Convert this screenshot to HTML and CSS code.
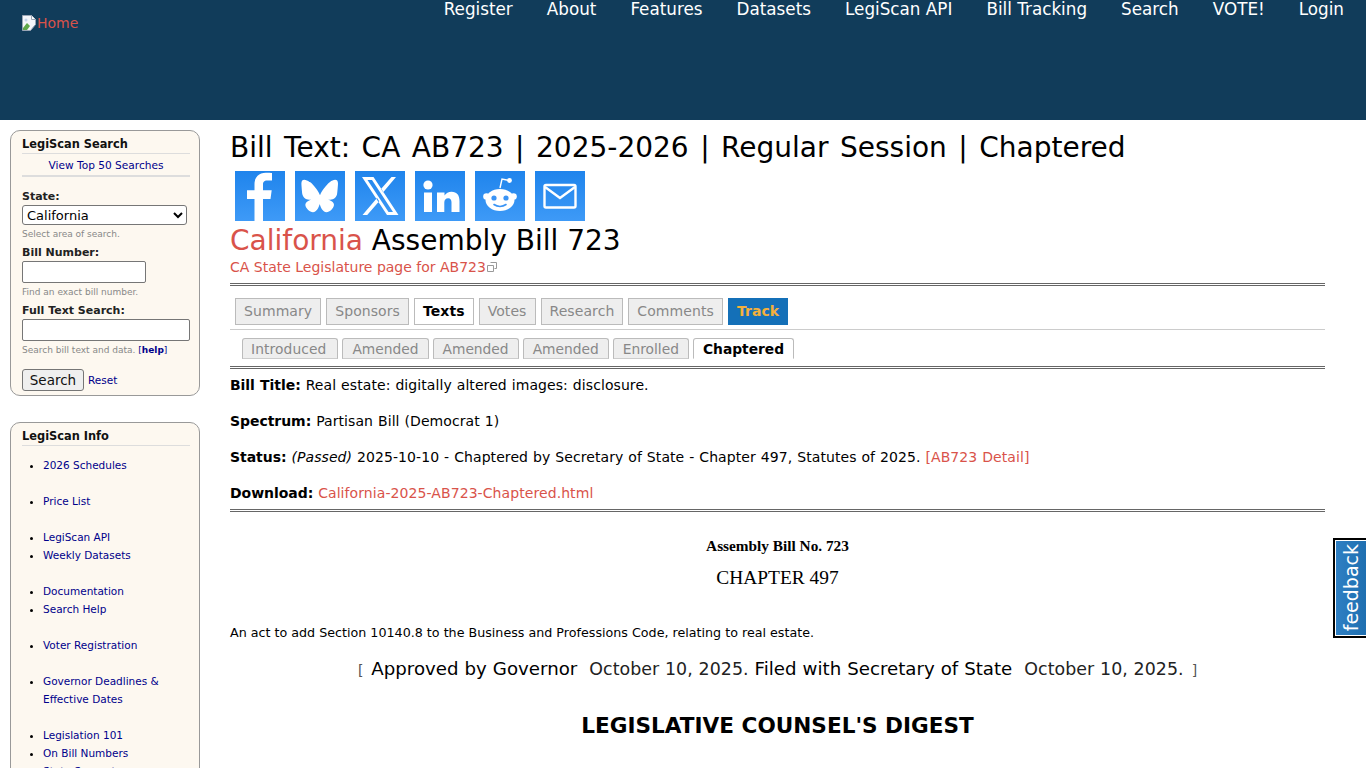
FILE: index.html
```html
<!DOCTYPE html>
<html lang="en">
<head>
  <meta charset="UTF-8">
  <meta name="viewport" content="width=device-width, initial-scale=1.0">
  <title>Bill Text: CA AB723 | 2025-2026 | Regular Session | Chaptered</title>
  <link rel="stylesheet" href="styles.css">
</head>
<body>
  <!-- Header -->
  <header class="site-header">
    <a href="#" class="logo">
      <svg class="broken-img" width="16" height="16" viewBox="0 0 16 16">
        <path d="M1.5 .5h9l4 4v5l-5 6h-8z" fill="#f4f6fa" stroke="#9aa5b5"/>
        <path d="M10.5 .5v4h4" fill="#fff" stroke="#9aa5b5"/>
        <path d="M2 13l4-5 3 3-3 4H2z" fill="#5fa84a"/>
        <circle cx="5" cy="5" r="1.5" fill="#c5d4ea"/>
      </svg>Home
    </a>
    <nav class="main-nav">
      <a href="#">Register</a>
      <a href="#">About</a>
      <a href="#">Features</a>
      <a href="#">Datasets</a>
      <a href="#">LegiScan API</a>
      <a href="#">Bill Tracking</a>
      <a href="#">Search</a>
      <a href="#">VOTE!</a>
      <a href="#">Login</a>
    </nav>
  </header>

  <div class="page">
    <!-- Sidebar -->
    <aside class="sidebar">
      <div class="side-box">
        <h2>LegiScan Search</h2>
        <p class="top-link"><a href="#">View Top 50 Searches</a></p>
        <form class="search-form">
          <label for="state">State:</label>
          <select id="state">
            <option>California</option>
          </select>
          <small>Select area of search.</small>
          <label for="bill">Bill Number:</label>
          <input type="text" id="bill" class="bill-input">
          <small>Find an exact bill number.</small>
          <label for="fulltext">Full Text Search:</label>
          <input type="text" id="fulltext" class="text-input">
          <small>Search bill text and data. <span class="help">[<a href="#">help</a>]</span></small>
          <div class="form-buttons">
            <button type="button">Search</button>
            <a href="#">Reset</a>
          </div>
        </form>
      </div>

      <div class="side-box">
        <h2>LegiScan Info</h2>
        <ul class="info-list">
          <li><a href="#">2026 Schedules</a></li>
          <li class="gap"><a href="#">Price List</a></li>
          <li class="gap"><a href="#">LegiScan API</a></li>
          <li><a href="#">Weekly Datasets</a></li>
          <li class="gap"><a href="#">Documentation</a></li>
          <li><a href="#">Search Help</a></li>
          <li class="gap"><a href="#">Voter Registration</a></li>
          <li class="gap"><a href="#">Governor Deadlines &amp; Effective Dates</a></li>
          <li class="gap"><a href="#">Legislation 101</a></li>
          <li><a href="#">On Bill Numbers</a></li>
          <li><a href="#">State Support</a></li>
        </ul>
      </div>
    </aside>

    <!-- Main content -->
    <main class="content">
      <h1>Bill Text: CA AB723 | 2025-2026 | Regular Session | Chaptered</h1>

      <div class="share">
        <a href="#" class="share-btn"><svg viewBox="0 0 50 50"><path d="M28 50V28h7.500l1.200-8.700H28v-5.500c0-2.500.8-4.200 4.300-4.200H37V2.100C36.100 2 33.600 1.800 30.800 1.800c-6.700 0-11.300 4.100-11.300 11.600v5.900H12V28h7.500v22z" fill="#fff"/></svg></a>
        <a href="#" class="share-btn"><svg viewBox="0 0 50 50"><path d="M15 11c4.300 3.200 8.600 9.700 10 13.200 1.400-3.500 5.700-10 10-13.200 3-2.300 8-4 8 1.600 0 1.100-.6 9.400-1 10.800-1.300 4.700-6.100 5.900-10.300 5.200 7.400 1.300 9.300 5.400 5.200 9.600-7.700 7.900-11.100-2-12-4.500-.1-.5-.2-.7-.2-.5 0-.2-.1 0-.2.500-.9 2.500-4.300 12.400-12 4.500-4.100-4.200-2.200-8.300 5.200-9.600-4.200.7-9-.5-10.300-5.200-.4-1.400-1-9.700-1-10.800 0-5.600 5-3.900 8-1.600z" fill="#fff"/></svg></a>
        <a href="#" class="share-btn"><svg viewBox="0 0 50 50"><path d="M7 6h11.500l25 38H32zM12.500 9l21 32h4.500L17 9zM41 6h-4.500L26 18l2.200 3.300zM7.500 44h4.700l12-13.700-2.200-3.300z" fill="#fff"/></svg></a>
        <a href="#" class="share-btn"><svg viewBox="0 0 50 50"><circle cx="13" cy="14" r="4.600" fill="#fff"/><path d="M9 21.500h8V41H9zM22 21.500h7.500v3c1.500-2.300 4-3.700 7-3.700 5.500 0 8 3.400 8 9.500V41h-8v-9.500c0-2.700-1-4.300-3.300-4.300-2.500 0-3.900 1.700-3.900 4.300V41H22z" fill="#fff"/></svg></a>
        <a href="#" class="share-btn"><svg viewBox="0 0 50 50"><path d="M25 17l2-9 6 1.300" fill="none" stroke="#fff" stroke-width="1.400"/><circle cx="34.500" cy="9.500" r="2.400" fill="#fff"/><circle cx="11.500" cy="25.500" r="3.300" fill="#fff"/><circle cx="38.500" cy="25.500" r="3.300" fill="#fff"/><ellipse cx="25" cy="29" rx="14.500" ry="11" fill="#fff"/><circle cx="19" cy="27" r="2.600" fill="#3a94f5"/><circle cx="31" cy="27" r="2.600" fill="#3a94f5"/><path d="M19 33.500c3.500 2.600 8.500 2.600 12 0" fill="none" stroke="#3a94f5" stroke-width="1.600" stroke-linecap="round"/></svg></a>
        <a href="#" class="share-btn"><svg viewBox="0 0 50 50"><rect x="9.500" y="14" width="31" height="22.500" rx="1.500" fill="none" stroke="#fff" stroke-width="2.400"/><path d="M10 16l15 11 15-11" fill="none" stroke="#fff" stroke-width="2.400"/></svg></a>
      </div>

      <h2 class="bill-name"><a href="#">California</a> Assembly Bill 723</h2>
      <p class="state-link"><a href="#">CA State Legislature page for AB723</a><svg class="ext" width="10" height="10" viewBox="0 0 10 10"><path d="M3.500 .5h6v6h-2M.5 3.500h6v6h-6z" fill="none" stroke="#999"/></svg></p>

      <hr class="double">

      <ul class="tabs">
        <li><a href="#">Summary</a></li>
        <li><a href="#">Sponsors</a></li>
        <li class="current"><a href="#">Texts</a></li>
        <li><a href="#">Votes</a></li>
        <li><a href="#">Research</a></li>
        <li><a href="#">Comments</a></li>
        <li class="track"><a href="#">Track</a></li>
      </ul>

      <ul class="subtabs">
        <li><a href="#">Introduced</a></li>
        <li><a href="#">Amended</a></li>
        <li><a href="#">Amended</a></li>
        <li><a href="#">Amended</a></li>
        <li><a href="#">Enrolled</a></li>
        <li class="current"><a href="#">Chaptered</a></li>
      </ul>

      <hr class="double">

      <p class="meta"><b>Bill Title:</b> Real estate: digitally altered images: disclosure.</p>
      <p class="meta"><b>Spectrum:</b> Partisan Bill (Democrat 1)</p>
      <p class="meta"><b>Status:</b> <i>(Passed)</i> 2025-10-10 - Chaptered by Secretary of State - Chapter 497, Statutes of 2025. <a href="#">[AB723 Detail]</a></p>
      <p class="meta"><b>Download:</b> <a href="#">California-2025-AB723-Chaptered.html</a></p>

      <hr class="double">

      <div class="bill-text">
        <p class="bill-no">Assembly Bill No. 723</p>
        <p class="chapter">CHAPTER 497</p>
        <p class="act">An act to add Section 10140.8 to the Business and Professions Code, relating to real estate.</p>
        <p class="approved"><span class="bracket">[</span> Approved by Governor <span class="date">October 10, 2025.</span> Filed with Secretary of State <span class="date">October 10, 2025.</span> <span class="bracket">]</span></p>
        <p class="digest">LEGISLATIVE COUNSEL'S DIGEST</p>
      </div>
    </main>
  </div>

  <a href="#" class="feedback"><span>feedback</span></a>
</body>
</html>
```

FILE: styles.css
```css
/* Basic Reset */
* {
  margin: 0;
  padding: 0;
  box-sizing: border-box;
}

html, body {
  height: 768px;
  overflow: hidden;
}

body {
  background-color: #fff;
  font-family: "DejaVu Sans", Verdana, sans-serif;
  font-size: 14px;
  color: #000;
}

a {
  text-decoration: none;
}

/* Header */
.site-header {
  height: 120px;
  background-color: #113c5a;
  display: flex;
  justify-content: space-between;
  align-items: flex-start;
}

.logo {
  display: flex;
  align-items: center;
  margin: 15px 0 0 21px;
  color: #d9534a;
  font-size: 14px;
  line-height: 16px;
}

.main-nav {
  display: flex;
  gap: 34px;
  padding-right: 22px;
}

.main-nav a {
  color: #fff;
  font-size: 16.800px;
  line-height: 19px;
}

/* Page layout */
.page {
  display: flex;
  align-items: flex-start;
}

.sidebar {
  width: 190px;
  margin: 10px 0 0 10px;
  flex-shrink: 0;
}

.side-box {
  background-color: #fdf8f0;
  border: 1px solid #999;
  border-radius: 10px;
  padding: 6px 9px 4px 11px;
  margin-bottom: 26px;
}

.side-box h2 {
  font-size: 11.400px;
  font-weight: bold;
  line-height: 15px;
  color: #111;
  padding-bottom: 1px;
  border-bottom: 1px solid #ddd;
}

.top-link {
  text-align: center;
  font-size: 10.600px;
  line-height: 14px;
  padding: 4px 0 3px;
  border-bottom: 2px solid #ddd;
}

.side-box a {
  color: #00008b;
}

.search-form {
  display: flex;
  flex-direction: column;
  align-items: flex-start;
  padding-top: 13px;
}

.search-form label {
  font-size: 11px;
  line-height: 14px;
  font-weight: bold;
  color: #222;
}

.search-form select {
  width: 165px;
  height: 20px;
  margin-top: 1px;
  font-family: inherit;
  font-size: 13px;
  background: #fff;
  border: 1px solid #767676;
  border-radius: 3px;
}

.search-form input {
  height: 22px;
  margin-top: 1px;
  background: #fff;
  border: 1px solid #767676;
  border-radius: 2px;
}

.bill-input {
  width: 124px;
}

.text-input {
  width: 168px;
}

.search-form small {
  font-size: 9px;
  line-height: 12px;
  color: #888;
  margin: 3px 0 6px;
}

.help {
  color: #00008b;
}

.help a {
  font-weight: bold;
}

.form-buttons {
  display: flex;
  align-items: center;
  gap: 4px;
  margin-top: 7px;
}

.form-buttons button {
  width: 62px;
  height: 22px;
  font-family: inherit;
  font-size: 13.500px;
  background: #efefef;
  border: 1px solid #767676;
  border-radius: 3px;
  color: #111;
}

.form-buttons a {
  font-size: 10.500px;
}

.info-list {
  padding: 10px 0 0 21px;
  font-size: 10.500px;
  line-height: 18px;
}

.info-list .gap {
  margin-top: 18px;
}

/* Main content */
.content {
  width: 1095px;
  margin: 10px 0 0 30px;
}

.content a {
  color: #d9534a;
}

h1 {
  font-size: 28px;
  font-weight: normal;
  line-height: 34px;
  word-spacing: 2.600px;
  padding-top: 1px;
  color: #000;
}

.share {
  display: flex;
  gap: 10px;
  padding: 6px 0 0 5px;
}

.share-btn {
  display: block;
  width: 50px;
  height: 50px;
  background: linear-gradient(#1f84ec, #3e9af7);
}

.share-btn svg {
  display: block;
  width: 50px;
  height: 50px;
}

.bill-name {
  font-size: 28px;
  font-weight: normal;
  line-height: 34px;
  padding-top: 3px;
}

.state-link {
  font-size: 14px;
  line-height: 18px;
}

.ext {
  margin-left: 1px;
}

hr.double {
  border: none;
  border-top: 3px double #666;
  height: 4px;
}

.state-link + hr.double {
  margin-top: 7px;
}

.tabs {
  display: flex;
  list-style: none;
  gap: 5px;
  padding: 11px 5px 4px;
  border-bottom: 1px solid #ccc;
  font-size: 14px;
  letter-spacing: .08px;
}

.tabs a, .subtabs a {
  display: block;
  color: #888;
  background-color: #eee;
  border: 1px solid #bbb;
}

.tabs a {
  padding: 3px 8px;
  line-height: 19px;
}

.tabs .current a {
  background-color: #fff;
  color: #000;
  font-weight: bold;
}

.tabs .track a {
  background-color: #1470b8;
  border-color: #1470b8;
  color: #f5b03c;
  font-weight: bold;
}

.subtabs {
  display: flex;
  list-style: none;
  gap: 4px;
  padding: 8px 0 0 12px;
  font-size: 13.800px;
  margin-bottom: 7px;
}

.subtabs li:first-child a {
  padding-left: 8px;
  padding-right: 11px;
  letter-spacing: .1px;
}

.subtabs a {
  padding: 2px 9px 0;
  line-height: 17px;
  border-bottom-color: #ccc;
  border-radius: 3px 3px 0 0;
}

.subtabs .current a {
  background-color: #fff;
  border-bottom-color: #fff;
  color: #000;
  font-weight: bold;
}

.meta {
  font-size: 14px;
  line-height: 18px;
  letter-spacing: .08px;
  word-spacing: .4px;
  margin-bottom: 18px;
}

.meta b {
  letter-spacing: -.05px;
}

hr.double + .meta {
  margin-top: 6px;
}

.meta:last-of-type {
  margin-bottom: 7px;
}

.bill-text {
  padding-top: 24px;
}

.bill-text p {
  text-align: center;
}

.bill-text .bill-no {
  font-family: "Liberation Serif", "Times New Roman", serif;
  font-size: 15.300px;
  font-weight: bold;
  line-height: 18px;
}

.bill-text .chapter {
  font-family: "Liberation Serif", "Times New Roman", serif;
  font-size: 19.400px;
  line-height: 22px;
  margin-top: 12px;
}

.bill-text .act {
  text-align: left;
  font-size: 12.700px;
  line-height: 16px;
  margin-top: 36px;
}

.bill-text .approved {
  font-size: 18.200px;
  line-height: 22px;
  word-spacing: .2px;
  margin-top: 17px;
}

.bracket {
  font-size: 14px;
  margin: 0 2px;
  color: #555;
}

.date {
  margin-left: 6px;
  font-size: 17.400px;
  letter-spacing: .05px;
  color: #222;
}

.bill-text .digest {
  font-size: 21.600px;
  font-weight: bold;
  line-height: 26px;
  margin-top: 32px;
}

/* Feedback tab */
.feedback {
  position: absolute;
  left: 1333px;
  top: 538px;
  width: 33px;
  height: 100px;
  display: flex;
  align-items: center;
  justify-content: center;
  background: linear-gradient(to right, #2f80c4, #1f6fb0);
  border: 2px solid #000;
  border-right: none;
  box-shadow: inset 1px 1px 0 #fff, inset 0 -1px 0 #fff;
}

.feedback span {
  color: #fff;
  font-size: 19px;
  writing-mode: vertical-rl;
  transform: rotate(180deg);
}
```
